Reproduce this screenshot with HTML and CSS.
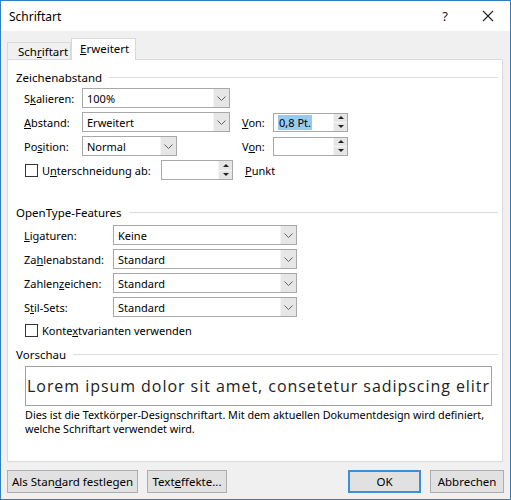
FILE: index.html
```html
<!DOCTYPE html>
<html lang="de">
<head>
<meta charset="utf-8">
<title>Schriftart</title>
<link rel="stylesheet" href="styles.css">
</head>
<body>
<div class="window">
  <div class="titlebar">
    <span class="title">Schriftart</span>
    <span class="help">?</span>
    <span class="close"><svg width="12" height="12" viewBox="0 0 12 12"><path d="M1 1L11 11M11 1L1 11" stroke="#222" stroke-width="1.1" fill="none"/></svg></span>
  </div>
  <div class="tabs">
    <div class="tab">Sch<u>r</u>iftart</div>
    <div class="tab active"><u>E</u>rweitert</div>
  </div>
  <div class="panel">
    <div class="group-head"><span>Zeichenabstand</span></div>
    <div class="row r1">
      <span class="lbl w58">S<u>k</u>alieren:</span>
      <div class="combo w148"><span class="val">100%</span><span class="drop"><svg width="9" height="5" viewBox="0 0 9 5"><path d="M0.5 0.5L4.5 4.5L8.5 0.5" stroke="#606060" fill="none"/></svg></span></div>
    </div>
    <div class="row">
      <span class="lbl w58"><u>A</u>bstand:</span>
      <div class="combo w148"><span class="val">Erweitert</span><span class="drop"><svg width="9" height="5" viewBox="0 0 9 5"><path d="M0.5 0.5L4.5 4.5L8.5 0.5" stroke="#606060" fill="none"/></svg></span></div>
      <span class="lbl von"><u>V</u>on:</span>
      <div class="spin w75"><span class="val"><span class="sel">0,8 Pt.</span></span><span class="arrows"><span class="up"></span><span class="down"></span></span></div>
    </div>
    <div class="row">
      <span class="lbl w58">Po<u>s</u>ition:</span>
      <div class="combo w95"><span class="val">Normal</span><span class="drop"><svg width="9" height="5" viewBox="0 0 9 5"><path d="M0.5 0.5L4.5 4.5L8.5 0.5" stroke="#606060" fill="none"/></svg></span></div>
      <span class="lbl von von2">V<u>o</u>n:</span>
      <div class="spin w75"><span class="val"></span><span class="arrows"><span class="up"></span><span class="down"></span></span></div>
    </div>
    <div class="row">
      <span class="check"></span>
      <span class="lbl w119">U<u>n</u>terschneidung ab:</span>
      <div class="spin w72"><span class="val"></span><span class="arrows"><span class="up"></span><span class="down"></span></span></div>
      <span class="lbl punkt"><u>P</u>unkt</span>
    </div>

    <div class="group-head ot"><span>OpenType-Features</span></div>
    <div class="row r1">
      <span class="lbl w89"><u>L</u>igaturen:</span>
      <div class="combo w184"><span class="val">Keine</span><span class="drop"><svg width="9" height="5" viewBox="0 0 9 5"><path d="M0.5 0.5L4.5 4.5L8.5 0.5" stroke="#606060" fill="none"/></svg></span></div>
    </div>
    <div class="row">
      <span class="lbl w89">Za<u>h</u>lenabstand:</span>
      <div class="combo w184"><span class="val">Standard</span><span class="drop"><svg width="9" height="5" viewBox="0 0 9 5"><path d="M0.5 0.5L4.5 4.5L8.5 0.5" stroke="#606060" fill="none"/></svg></span></div>
    </div>
    <div class="row">
      <span class="lbl w89">Zahlen<u>z</u>eichen:</span>
      <div class="combo w184"><span class="val">Standard</span><span class="drop"><svg width="9" height="5" viewBox="0 0 9 5"><path d="M0.5 0.5L4.5 4.5L8.5 0.5" stroke="#606060" fill="none"/></svg></span></div>
    </div>
    <div class="row">
      <span class="lbl w89">S<u>t</u>il-Sets:</span>
      <div class="combo w184"><span class="val">Standard</span><span class="drop"><svg width="9" height="5" viewBox="0 0 9 5"><path d="M0.5 0.5L4.5 4.5L8.5 0.5" stroke="#606060" fill="none"/></svg></span></div>
    </div>
    <div class="row chkrow">
      <span class="check"></span>
      <span class="lbl">Konte<u>x</u>tvarianten verwenden</span>
    </div>

    <div class="group-head vs"><span>Vorschau</span></div>
    <div class="preview"><span>Lorem ipsum dolor sit amet, consetetur sadipscing elitr</span></div>
    <p class="desc">Dies ist die Textkörper-Designschriftart. Mit dem aktuellen Dokumentdesign wird definiert,<br>welche Schriftart verwendet wird.</p>
  </div>
  <div class="footer">
    <button class="btn b1">Als Stan<u>d</u>ard festlegen</button>
    <button class="btn b2">Text<u>e</u>ffekte...</button>
    <button class="btn ok">OK</button>
    <button class="btn cancel">Abbrechen</button>
  </div>
</div>
</body>
</html>
```
FILE: styles.css
```css
* { box-sizing: border-box; }
html, body { margin: 0; padding: 0; background: #fff; }
body {
  font-family: "Noto Sans", "Open Sans", sans-serif;
  font-size: 11px;
  color: #000;
}
u { text-decoration: underline; text-underline-offset: 1px; }

.window {
  width: 511px;
  height: 500px;
  border: 1px solid #2f7fc1;
  background: #f0f0f0;
  display: flex;
  flex-direction: column;
}

.titlebar {
  height: 30px;
  background: #fff;
  display: flex;
  align-items: center;
  padding-left: 8px;
  flex-shrink: 0;
}
.title { font-size: 12px; flex: 1; }
.help { width: 14px; margin-right: 30px; font-size: 13px; color: #222; text-align: center; }
.close { width: 12px; height: 12px; margin-right: 16px; display: flex; }

.tabs {
  display: flex;
  align-items: flex-end;
  height: 28px;
  padding-left: 6px;
  flex-shrink: 0;
}
.tab {
  height: 17px;
  padding: 0 8px 0 10px;
  border: 1px solid #d9d9d9;
  border-bottom: none;
  display: flex;
  align-items: center;
  background: #f0f0f0;
  width: 64px;
  font-size: 11.5px;
}
.tab + .tab { border-left: none; }
.tab.active {
  height: 22px;
  background: #fff;
  width: 65px;
  margin-bottom: -1px;
  position: relative;
  z-index: 1;
  padding-left: 8px;
  padding-bottom: 2px;
  border-left: 1px solid #d9d9d9;
}

.panel {
  margin-left: 6px;
  width: 496px;
  height: 403px;
  background: #fff;
  border: 1px solid #d9d9d9;
  padding: 9px 4px 0 8px;
  flex-shrink: 0;
}

.group-head {
  display: flex;
  align-items: center;
  height: 16px;
  font-size: 11.5px;
}
.group-head::after {
  content: "";
  flex: 1;
  height: 1px;
  background: #dcdcdc;
  margin-left: 7px;
}
.group-head.ot { margin-top: 24px; }
.group-head.vs { margin-top: 8px; }

.row {
  display: flex;
  align-items: center;
  height: 20px;
  margin-top: 4px;
  padding-left: 8px;
}
.row.r1 { margin-top: 3px; }
.group-head.ot + .row.r1 { margin-top: 5px; }

.lbl { white-space: nowrap; }
.w58 { width: 58px; flex-shrink: 0; }
.w89 { width: 89px; flex-shrink: 0; }
.w119 { width: 119px; flex-shrink: 0; }

.combo, .spin {
  height: 20px;
  border: 1px solid #a8a8a8;
  background: #fff;
  display: flex;
  flex-shrink: 0;
}
.w148 { width: 148px; }
.w95 { width: 95px; }
.w184 { width: 184px; }
.w75 { width: 75px; height: 19px; }
.w72 { width: 72px; }

.val {
  flex: 1;
  display: flex;
  align-items: center;
  padding-left: 3px;
  overflow: hidden;
  white-space: nowrap;
}
.combo .val { padding-left: 4px; }
.drop {
  width: 16px;
  background: #e6e6e6;
  border-left: 1px solid #f4f4f4;
  display: flex;
  align-items: center;
  justify-content: center;
}

.von { margin-left: 12px; width: 31px; }
.von2 { margin-left: 65px; }
.punkt { margin-left: 12px; }

.sel { background: #99c9ef; padding: 0 1px; margin-left: 1px; }

.arrows {
  width: 14px;
  display: flex;
  flex-direction: column;
  background: #e6e6e6;
  border-left: 1px solid #f4f4f4;
}
.arrows span {
  flex: 1;
  display: flex;
  align-items: center;
  justify-content: center;
}
.arrows .up { border-bottom: 1px solid #f6f6f6; }
.arrows .up::before {
  content: "";
  border-left: 3px solid transparent;
  border-right: 3px solid transparent;
  border-bottom: 3px solid #222;
}
.arrows .down::before {
  content: "";
  border-left: 3px solid transparent;
  border-right: 3px solid transparent;
  border-top: 3px solid #222;
}

.check {
  width: 13px;
  height: 13px;
  border: 1px solid #333;
  background: #fff;
  margin-left: 1px;
  margin-right: 4px;
  flex-shrink: 0;
}
.chkrow { margin-top: 5px; height: 16px; }

.preview {
  margin: 4px 6px 0 9px;
  height: 40px;
  border: 1px solid #a0a0a0;
  display: flex;
  align-items: center;
  overflow: hidden;
  white-space: nowrap;
}
.preview span {
  font-family: "Open Sans", "Noto Sans", sans-serif;
  font-size: 16px;
  letter-spacing: 0.95px;
  color: #222;
  padding-left: 1px;
}
.desc {
  margin: 2px 0 0 9px;
  font-size: 10.8px;
  line-height: 14px;
  white-space: nowrap;
}

.footer {
  display: flex;
  padding: 8px 6px 0 6px;
}
.btn {
  height: 23px;
  background: #e1e1e1;
  border: 1px solid #adadad;
  font-family: inherit;
  font-size: 11.5px;
  color: #000;
  padding: 0;
  margin: 0;
}
.b1 { width: 131px; }
.b2 { width: 80px; margin-left: 9px; }
.ok {
  width: 73px;
  margin-left: auto;
  border: 2px solid #3c8fd6;
}
.cancel { width: 74px; margin-left: 9px; }
```
